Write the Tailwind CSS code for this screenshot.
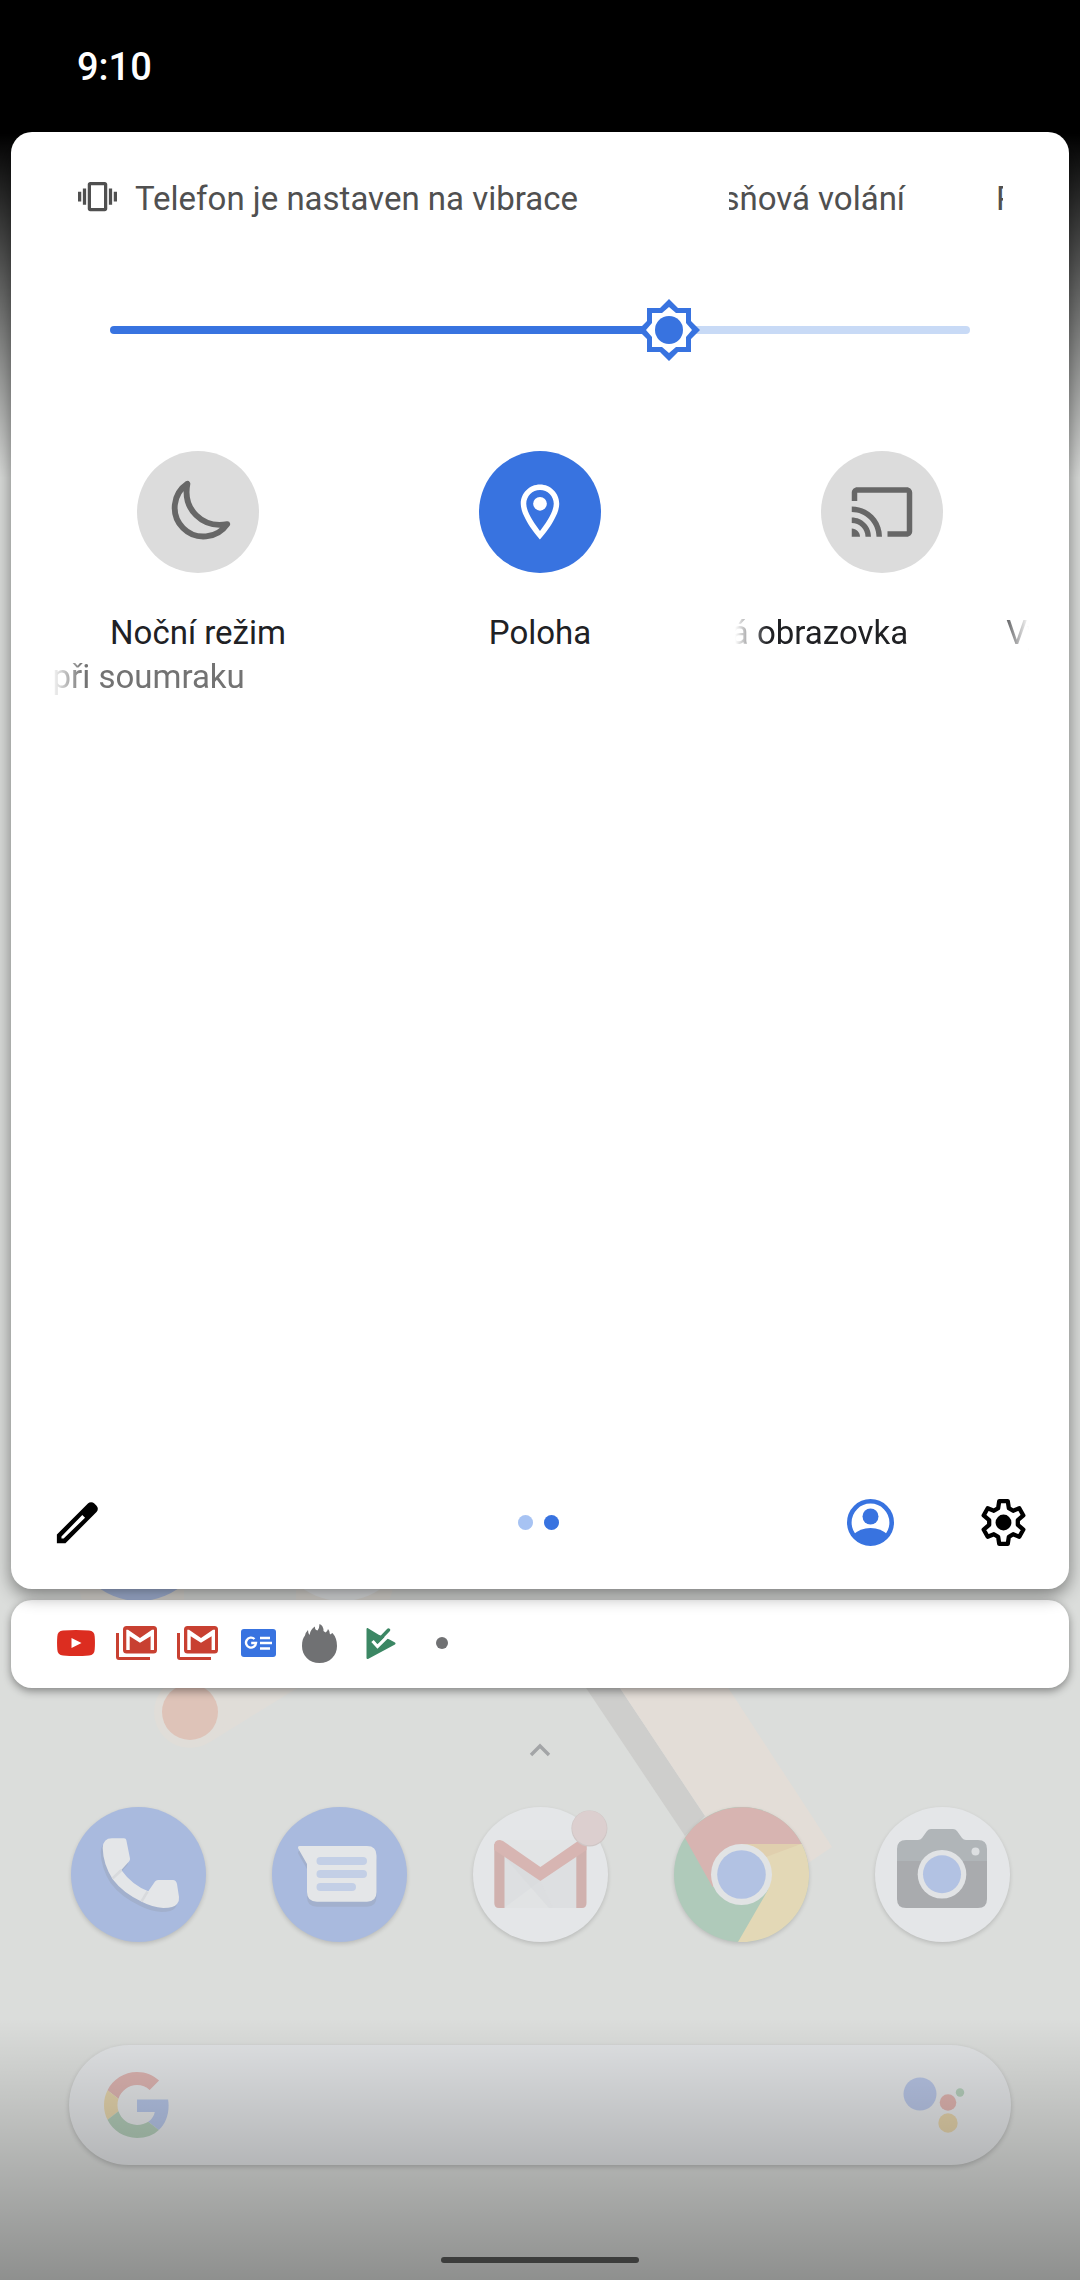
<!DOCTYPE html>
<html lang="cs">
<head>
<meta charset="utf-8">
<meta name="viewport" content="width=device-width, initial-scale=1">
<title>Rychlé nastavení</title>
<script src="https://cdn.jsdelivr.net/npm/@tailwindcss/browser@4"></script>
</head>
<body class="bg-[#dbdddb] font-[Roboto,sans-serif]">
<main class="relative flex min-h-screen flex-col overflow-hidden">

  <!-- Wallpaper -->
  <svg class="absolute inset-x-0 bottom-0 w-full" viewBox="0 1580 1080 700" aria-hidden="true">
    <path d="M77 1580H396L386 1610H84Z" fill="#e0ddd8"/>
    <path d="M184 1580H296V1612H184Z" fill="#dbdddb"/>
    <path d="M170 1682L230 1640H375L210 1742Z" fill="#e0ddd8"/>
    <circle cx="190" cy="1712" r="36" fill="#e0ddd8"/>
    <circle cx="190" cy="1712" r="28" fill="#dec3b8"/>
    <path d="M554 1640H588L705 1816 685 1836Z" fill="#cececc"/>
    <path d="M588 1640H697L832 1847 780 1882 749 1882Z" fill="#e3ddd7"/>
    <circle cx="139" cy="1533" r="68" fill="#a9bade"/>
    <circle cx="342" cy="1533" r="68" fill="#e4e6e8"/>
  </svg>

  <div class="absolute inset-x-0 top-[132px] h-[346px] bg-linear-to-b from-black to-black/0"></div>

  <!-- Status bar -->
  <header class="relative flex h-[132px] items-start bg-black px-[77px] pt-11">
    <time class="text-[38px] leading-[46px] font-medium text-white">9:10</time>
  </header>

  <!-- Quick settings -->
  <section class="relative z-10 mx-[11px] flex flex-1 flex-col rounded-[21px] bg-white px-4 shadow-[0_6px_18px_rgba(0,0,0,0.45)]">
    <div class="mr-[50px] ml-[51px] flex items-start pt-[45px] text-[33px] leading-[44px] text-[#505050]">
      <svg class="size-[39px] shrink-0" viewBox="0 0 24 24" fill="currentColor" aria-hidden="true"><path d="M0 15h2V9H0v6zm3 2h2V7H3v10zm19-8v6h2V9h-2zm-3 8h2V7h-2v10zM16.500 3h-9C6.670 3 6 3.670 6 4.500v15c0 .83.67 1.500 1.500 1.500h9c.83 0 1.500-.67 1.500-1.500v-15c0-.83-.67-1.500-1.500-1.500zM16 19H8V5h8v14z"/></svg>
      <p class="ml-[18px] whitespace-nowrap">Telefon je nastaven na vibrace</p>
      <div class="ml-auto flex w-[274px] gap-[91px] overflow-hidden whitespace-nowrap">
        <span class="-ml-[125px] shrink-0">Pouze tísňová volání</span>
        <span class="shrink-0" aria-hidden="true">Pouze tísňová volání</span>
      </div>
    </div>

    <div class="relative mx-[83px] mt-[78px] h-[62px]">
      <input type="range" min="0" max="100" value="65" aria-label="Jas" class="absolute inset-x-0 top-[27px] h-2 w-full appearance-none rounded-full bg-linear-to-r from-[#3873e0] from-65% to-[#c8daf6] to-65% [&::-webkit-slider-thumb]:size-[62px] [&::-webkit-slider-thumb]:appearance-none">
      <svg class="pointer-events-none absolute left-[65%] size-[62px] -translate-x-1/2" viewBox="-31 -31 62 62" aria-hidden="true">
        <path fill="#3873e0" d="M0-31 9-22H22V-9L31 0 22 9V22H9L0 31-9 22H-22V9L-31 0-22-9V-22H-9Z"/>
        <path fill="#fff" d="M0-23 7-17H17V-7L23 0 17 7V17H7L0 23-7 17H-17V7L-23 0-17-7V-17H-7Z"/>
        <circle r="14" fill="#3873e0"/>
      </svg>
    </div>

    <div class="mt-[90px] grid grid-cols-3 text-[33px] leading-[44px]">
      <button type="button" class="flex min-w-0 flex-col items-center px-6">
        <span class="flex size-[122px] items-center justify-center rounded-full bg-[#dcdcdc]">
          <svg class="size-full" viewBox="0 0 121 121" fill="none" stroke="#676767" stroke-width="5.800" stroke-linejoin="round" aria-hidden="true"><path d="M50 32.500C45 58 65 77 89.500 72.500A28.600 28.600 0 1 1 50 32.500Z"/></svg>
        </span>
        <span class="mt-[38px] text-[#202124]">Noční režim</span>
        <span class="flex w-full justify-start overflow-hidden whitespace-nowrap text-[#737373] [mask-image:linear-gradient(to_right,transparent,black_32px)]"><span class="-ml-[129px] shrink-0">Zapnout při soumraku</span></span>
      </button>
      <button type="button" class="flex min-w-0 flex-col items-center px-6">
        <span class="flex size-[122px] items-center justify-center rounded-full bg-[#3873e0]">
          <svg class="size-[66px]" viewBox="0 0 24 24" fill="#fff" aria-hidden="true"><path d="M12 2C8.130 2 5 5.130 5 9c0 5.250 7 13 7 13s7-7.750 7-13c0-3.870-3.130-7-7-7zM7 9c0-2.760 2.240-5 5-5s5 2.240 5 5c0 2.880-2.880 7.190-5 9.880C9.920 16.210 7 11.850 7 9z"/><circle cx="12" cy="9" r="2.500"/></svg>
        </span>
        <span class="mt-[38px] text-[#202124]">Poloha</span>
      </button>
      <button type="button" class="flex min-w-0 flex-col items-center px-6">
        <span class="flex size-[122px] items-center justify-center rounded-full bg-[#dcdcdc]">
          <svg class="size-[66px]" viewBox="0 0 24 24" fill="#676767" aria-hidden="true"><path d="M21 3H3c-1.100 0-2 .9-2 2v3h2V5h18v14h-7v2h7c1.100 0 2-.9 2-2V5c0-1.100-.9-2-2-2zM1 18v3h3c0-1.660-1.340-3-3-3zm0-4v2c2.760 0 5 2.240 5 5h2c0-3.870-3.130-7-7-7zm0-4v2c4.970 0 9 4.030 9 9h2c0-6.080-4.930-11-11-11z"/></svg>
        </span>
        <span class="mt-[38px] flex w-full gap-[98px] overflow-hidden whitespace-nowrap text-[#202124] [mask-image:linear-gradient(to_right,transparent,black_32px,black_262px,transparent)]"><span class="-ml-[110px] shrink-0">Vysílaná obrazovka</span><span class="shrink-0" aria-hidden="true">Vysílaná obrazovka</span></span>
      </button>
    </div>

    <footer class="mt-auto grid grid-cols-[1fr_auto_1fr] items-center pr-[26px] pb-[39px] pl-[23px]">
      <button type="button" aria-label="Upravit" class="justify-self-start">
        <svg class="size-[55px]" viewBox="0 0 24 24" aria-hidden="true"><path fill-rule="evenodd" d="M3 17.250V21h3.750L20.300 7.450a2 2 0 0 0 0-2.800L19.350 3.700a2 2 0 0 0-2.800 0ZM5 18.100 14.100 8.700 15.300 9.900 5.950 19H5Z"/></svg>
      </button>
      <div class="flex gap-[11px]">
        <span class="size-[15px] rounded-full bg-[#a7c3f3]"></span>
        <span class="size-[15px] rounded-full bg-[#3873e0]"></span>
      </div>
      <div class="flex items-center gap-[86px] justify-self-end">
        <button type="button" aria-label="Uživatel">
          <svg class="size-[47px]" viewBox="0 0 47 47" aria-hidden="true"><circle cx="23.500" cy="23.500" r="21.200" fill="none" stroke="#3873e0" stroke-width="4.600"/><circle cx="23.500" cy="17.500" r="8" fill="#3873e0"/><path fill="#3873e0" d="M6 36Q13 29 23.500 29T41 36Q35 44 23.500 45 12 44 6 36Z"/></svg>
        </button>
        <button type="button" aria-label="Nastavení">
          <svg class="size-[47px]" viewBox="1 1 22 22" aria-hidden="true"><path fill="none" stroke="#000" stroke-width="2" stroke-linejoin="round" d="M10 2H14L14.500 5.300 16.500 6.500 19.400 5.300 21.300 8.700 18.700 10.900V13.100L21.300 15.300 19.400 18.700 16.500 17.500 14.500 18.700 14 22H10L9.500 18.700 7.500 17.500 4.600 18.700 2.700 15.300 5.300 13.100V10.900L2.700 8.700 4.600 5.300 7.500 6.500 9.500 5.300Z"/><circle cx="12" cy="12" r="3.700"/></svg>
        </button>
      </div>
    </footer>
  </section>

  <!-- Notification shelf -->
  <section class="relative mx-[11px] mt-[11px] flex h-[88px] items-center rounded-[21px] bg-white px-[34px] pb-0.5 shadow-[0_3px_8px_rgba(0,0,0,0.4)]" aria-label="Oznámení">
    <span class="flex w-[61px] justify-center"><svg class="h-[26px] w-[38px]" viewBox="0 0 38 26"><path fill="#dc2d20" d="M6 .5Q19-.5 32 .5 37.500 1 37.700 6.500 38.200 13 37.700 19.500 37.500 25 32 25.500 19 26.500 6 25.500.5 25 .3 19.500-.2 13 .3 6.500.5 1 6 .5Z"/><path fill="#fff" d="M14.500 8V18L24.500 13Z"/></svg></span>
    <span class="flex w-[61px] justify-center"><svg class="h-[34px] w-[41px]" viewBox="0 0 41 34"><path d="M1.500 7V31Q1.500 32.500 3 32.500H34" fill="none" stroke="#c84031" stroke-width="3"/><rect x="7" width="34" height="27.500" rx="3.500" fill="#c84031"/><path fill="#fff" d="M10.300 24V3.700H12L24 12 36 3.700H38V24H34.600V10.200L24 16.700 13.700 10.200V24Z"/></svg></span>
    <span class="flex w-[61px] justify-center"><svg class="h-[34px] w-[41px]" viewBox="0 0 41 34"><path d="M1.500 7V31Q1.500 32.500 3 32.500H34" fill="none" stroke="#c84031" stroke-width="3"/><rect x="7" width="34" height="27.500" rx="3.500" fill="#c84031"/><path fill="#fff" d="M10.300 24V3.700H12L24 12 36 3.700H38V24H34.600V10.200L24 16.700 13.700 10.200V24Z"/></svg></span>
    <span class="flex w-[61px] justify-center"><svg class="h-[28px] w-[35px]" viewBox="0 0 35 28"><rect width="35" height="28" rx="3" fill="#3873e0"/><path d="M13.500 10A5 5 0 1 0 15 14H10.200M19 9H29M19 14H31M19 19.500H29" fill="none" stroke="#fff" stroke-width="2.400"/></svg></span>
    <span class="flex w-[61px] justify-center"><svg class="h-[39px] w-[35px]" viewBox="0 0 35 39"><path fill="#707173" d="M17.500 39C7 39 0 31.500 0 22 0 17 1 14 3 11.500Q3.500 8.500 6 6 6 9 7.500 11 8.500 5 13 2.500 12.500 6 15.500 6.500 17.500 4 17.500 0 21.500 1.500 21.500 7L23.500 8.500Q25.500 7.500 26 5 28 7 28 10.500L30.500 9Q35 14 35 22C35 31.500 28 39 17.500 39Z"/></svg></span>
    <span class="flex w-[61px] justify-center"><svg class="h-[31px] w-[30px]" viewBox="0 0 30 31"><path fill="#3c8764" stroke="#3c8764" stroke-width="2" stroke-linejoin="round" d="M1.500 1V30L28.500 15.500 23 12.500 13 8 1.500 1Z"/><path d="M6.500 13 11.500 18.500 23.500 6.500" fill="none" stroke="#fff" stroke-width="3.200"/><path d="M11.500 13.500 22.500 2" fill="none" stroke="#3c8764" stroke-width="3.400" stroke-linecap="round"/></svg></span>
    <span class="flex w-[61px] justify-center"><span class="size-3 rounded-full bg-[#707173]"></span></span>
  </section>

  <!-- Home screen -->
  <section class="relative flex flex-col items-center pt-[50px]">
    <svg class="size-6" viewBox="0 0 24 24" fill="none" stroke="#a3a5a7" stroke-width="3.400" aria-hidden="true"><path d="M3 17 12 8 21 17"/></svg>
    <nav class="mt-[45px] grid w-full grid-cols-5 justify-items-center pr-[37px] pl-[38px]">
      <a href="#" aria-label="Telefon" class="size-[135px] rounded-full bg-[#a9bade] shadow-[0_2px_4px_rgba(0,0,0,0.15)]">
        <svg viewBox="0 0 135 135"><path transform="translate(-2 4)" fill="#a2b0cd" d="M41 31.300H53Q55 31.300 55.300 33L59 51.500Q59.300 53 58 54.500L50.300 63Q61 78 77.300 84.300L84 74.500Q85 73 87 73H102Q105 73 106 77L108 90Q108.500 94 106 97 103 101 92.300 101 81 100 70.700 94.700 52 86 41.700 72.300 32 57 31.700 41 32 31.300 41 31.300Z"/><path fill="#e4e6e8" d="M41 31.300H53Q55 31.300 55.300 33L59 51.500Q59.300 53 58 54.500L50.300 63Q61 78 77.300 84.300L84 74.500Q85 73 87 73H102Q105 73 106 77L108 90Q108.500 94 106 97 103 101 92.300 101 81 100 70.700 94.700 52 86 41.700 72.300 32 57 31.700 41 32 31.300 41 31.300Z"/><path d="M50.500 63 41.500 71.500M76.500 84.500 70.500 94.500" stroke="#d8dadd" stroke-width="2.500"/></svg>
      </a>
      <a href="#" aria-label="Zprávy" class="size-[135px] rounded-full bg-[#a9bade] shadow-[0_2px_4px_rgba(0,0,0,0.15)]">
        <svg viewBox="0 0 135 135"><path transform="translate(0 5)" fill="#a2b0cd" d="M27.500 39H95Q104.500 39 104.500 48.500V85Q104.500 94.700 95 94.700H45Q35 94.700 35 85V57L26.200 41.500Q25.500 39 27.500 39Z"/><path fill="#e4e6e8" d="M27.500 39H95Q104.500 39 104.500 48.500V85Q104.500 94.700 95 94.700H45Q35 94.700 35 85V57L26.200 41.500Q25.500 39 27.500 39Z"/><path d="M48.500 54H91M48.500 67H91M48.500 80H80" stroke="#c3cfe6" stroke-width="8" stroke-linecap="round"/></svg>
      </a>
      <a href="#" aria-label="Gmail" class="size-[135px] rounded-full bg-[#e4e6e8] shadow-[0_2px_4px_rgba(0,0,0,0.15)]">
        <svg class="overflow-visible" viewBox="0 0 135 135"><path fill="#dddfe1" d="M28 45H108V101H28Z"/><path fill="#e2e4e5" d="M26 33H108L67.400 66Z"/><path fill="#e1e3e4" d="M31 101 67.400 74 80 101Z"/><path fill="#d8dadb" d="M31.500 50 67.400 74 80 101H76Z" opacity=".5"/><path fill="#d0b1ae" d="M21.300 37H31.500V101H26Q21.300 101 21.300 96ZM103.300 37H113.500V96Q113.500 101 109 101H103.300Z"/><path fill="#d7b5b2" d="M21.300 38Q21.500 33 27 33L30 34 67.400 60 105 34 108 33Q113.300 33 113.500 38V43L67.400 74 21.300 43Z"/><circle cx="116.400" cy="21.500" r="18" fill="#cfc6c5"/><circle cx="116.400" cy="21" r="17.300" fill="#dccfcf"/></svg>
      </a>
      <a href="#" aria-label="Chrome" class="size-[135px] rounded-full bg-[#afcaba] shadow-[0_2px_4px_rgba(0,0,0,0.15)]">
        <svg viewBox="0 0 135 135"><path fill="#d7b4b1" d="M11 31A67.500 67.500 0 0 1 127.700 37H67.500L38.500 80Z"/><path fill="#e3d8b6" d="M127.700 37A67.500 67.500 0 0 1 64 135L94 83 67.500 67.500V37Z"/><path fill="#e0cfae" d="M67.500 37H127L92 50Z"/><circle cx="67.500" cy="67.500" r="30.500" fill="#e1e3e4"/><circle cx="67.500" cy="67.500" r="24.300" fill="#b2c2e3"/></svg>
      </a>
      <a href="#" aria-label="Fotoaparát" class="size-[135px] rounded-full bg-[#e4e6e8] shadow-[0_2px_4px_rgba(0,0,0,0.15)]">
        <svg viewBox="0 0 135 135"><path fill="#b0b5b8" d="M22 60V42Q22 33 31 33H43Q45.500 33 47 31L52 24Q53.500 22 56 22H78Q80.500 22 82 24L87 31Q88.500 33 91 33H103Q112 33 112 42V60Z"/><path fill="#a9abae" d="M22 54H112V92Q112 101 103 101H31Q22 101 22 92Z"/><circle cx="67" cy="67.300" r="24.300" fill="#e1e3e5"/><circle cx="67" cy="67.300" r="19" fill="#b2c2e3"/><circle cx="100.500" cy="44.500" r="4" fill="#dcdfe1"/></svg>
      </a>
    </nav>

    <form class="mt-[103px] flex h-[120px] w-full px-[69px]" role="search">
      <div class="flex w-full items-center rounded-full bg-[#e1e3e5] pr-[46px] pl-[35px] shadow-[0_2px_5px_rgba(0,0,0,0.18)]">
        <svg class="size-[66px] shrink-0" viewBox="0 0 48 48" aria-hidden="true"><path fill="#dab2af" d="M24 9.500c3.540 0 6.710 1.220 9.210 3.600l6.850-6.850C35.900 2.380 30.470 0 24 0 14.620 0 6.510 5.380 2.560 13.220l7.980 6.190C12.430 13.720 17.740 9.500 24 9.500z"/><path fill="#b2c1e2" d="M46.980 24.550c0-1.570-.15-3.090-.38-4.550H24v9.020h12.940c-.58 2.960-2.260 5.480-4.780 7.180l7.730 6c4.510-4.180 7.090-10.360 7.090-17.650z"/><path fill="#e1d1aa" d="M10.530 28.590c-.48-1.450-.76-2.990-.76-4.590s.27-3.140.76-4.590l-7.980-6.190C.92 16.460 0 20.120 0 24c0 3.880.92 7.540 2.560 10.780l7.970-6.190z"/><path fill="#afc8b5" d="M24 48c6.480 0 11.930-2.130 15.890-5.810l-7.730-6c-2.150 1.450-4.920 2.300-8.160 2.300-6.260 0-11.570-4.220-13.470-9.910l-7.980 6.190C6.510 42.620 14.620 48 24 48z"/></svg>
        <input type="search" aria-label="Hledat" class="h-full min-w-0 flex-1 bg-transparent px-6 text-[33px] outline-none">
        <button type="button" aria-label="Asistent" class="shrink-0">
          <svg class="size-[62px]" viewBox="903 2074 62 62" aria-hidden="true"><circle cx="920" cy="2094" r="16.500" fill="#b5c2e2"/><circle cx="948" cy="2102.500" r="8.300" fill="#dcb2ae"/><circle cx="960" cy="2092.500" r="4.200" fill="#b3ccb9"/><circle cx="948" cy="2123" r="9.700" fill="#e0cfa8"/></svg>
        </button>
      </div>
    </form>
    <div class="relative z-10 mt-[92px] mb-[17px] h-1.5 w-[198px] rounded-full bg-[#3c3d3c]"></div>
    <div class="pointer-events-none absolute inset-x-0 bottom-0 h-[262px] bg-linear-to-b from-black/0 to-black/35"></div>
  </section>
</main>
</body>
</html>
